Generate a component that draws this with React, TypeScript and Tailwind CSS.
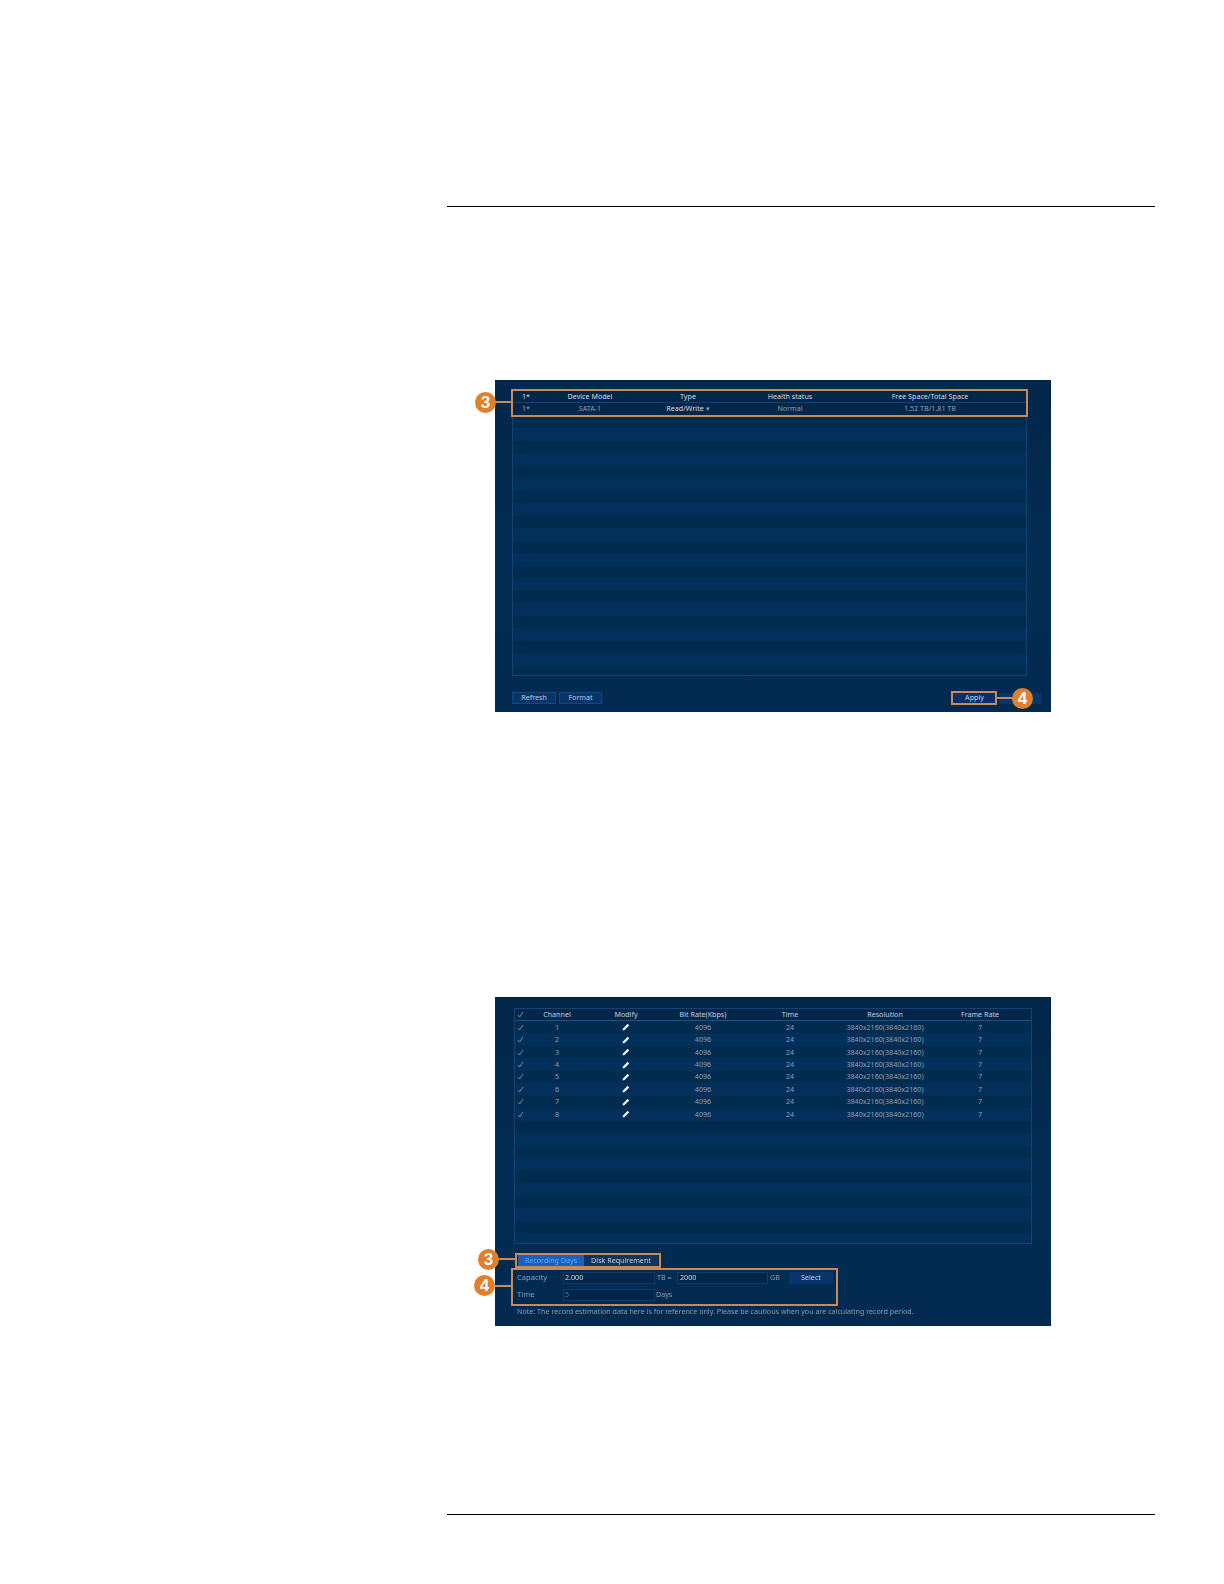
const font = { fontFamily: '"Noto Sans", sans-serif' };

function Callout({ n, className }: { n: string; className: string }) {
  return (
    <div className={`absolute flex h-[21px] w-[21px] items-center justify-center rounded-full bg-[#e0802f] text-[17px] font-bold leading-none text-white font-['Liberation_Sans',sans-serif] ${className}`}>
      {n}
    </div>
  );
}

function Pencil() {
  return (
    <svg width="8" height="8" viewBox="0 0 8 8" className="block">
      <path d="M0.6 7.4 L1 5.4 L5.6 0.8 L7.2 2.4 L2.6 7 Z" fill="#f2f5f8" />
    </svg>
  );
}

function Check() {
  return (
    <svg width="7" height="7" viewBox="0 0 7 7" className="block">
      <path d="M1 4 L2.6 6 L6 1" fill="none" stroke="#8aa0b8" strokeWidth="0.8" />
    </svg>
  );
}

function DiskTable() {
  const stripes = Array.from({ length: 21 }, (_, i) => i);
  const cols = "grid-cols-[26px_102px_94px_110px_170px]";
  return (
    <div className="flex h-[286px] w-[515px] flex-col overflow-hidden border border-[#14436f]">
      <div className={`grid h-[12px] shrink-0 ${cols} items-center border-b border-[#12406b] text-center text-[#d3dce7]`}>
        <span>1*</span>
        <span>Device Model</span>
        <span>Type</span>
        <span>Health status</span>
        <span>Free Space/Total Space</span>
      </div>
      <div className={`grid h-[12.5px] shrink-0 ${cols} items-center border-b border-[#12406b] text-center text-[#8a9fb5]`}>
        <span>1*</span>
        <span>SATA-1</span>
        <span className="text-[#d3dce7]">
          Read/Write <span className="text-[#8a9fb5]">▾</span>
        </span>
        <span>Normal</span>
        <span>1.52 TB/1.81 TB</span>
      </div>
      {stripes.map((i) => (
        <div key={i} className={i % 2 === 0 ? "h-[12.5px] shrink-0 bg-[#022c4f]" : "h-[12.5px] shrink-0 bg-[#03305a]"} />
      ))}
    </div>
  );
}

const channels = ["1", "2", "3", "4", "5", "6", "7", "8"];

function ChannelTable() {
  const empty = Array.from({ length: 10 }, (_, i) => i);
  const cols = "grid-cols-[10px_64px_74px_80px_94px_96px_94px]";
  return (
    <div className="flex h-[236px] w-[518px] flex-col overflow-hidden border border-[#14436f]">
      <div className={`grid h-[12px] shrink-0 ${cols} items-center border-b border-[#1a5486] text-center text-[#c3cfdd]`}>
        <span className="flex justify-center"><Check /></span>
        <span>Channel</span>
        <span>Modify</span>
        <span>Bit Rate(Kbps)</span>
        <span>Time</span>
        <span>Resolution</span>
        <span>Frame Rate</span>
      </div>
      {channels.map((c, i) => (
        <div key={c} className={`grid h-[12.45px] shrink-0 ${cols} items-center text-center text-[#8a9fb5] ${i % 2 === 0 ? "bg-[#022c4f]" : "bg-[#03305a]"}`}>
          <span className="flex justify-center"><Check /></span>
          <span>{c}</span>
          <span className="flex justify-center"><Pencil /></span>
          <span>4096</span>
          <span>24</span>
          <span>3840x2160(3840x2160)</span>
          <span>7</span>
        </div>
      ))}
      {empty.map((i) => (
        <div key={i} className={i % 2 === 0 ? "h-[12.5px] shrink-0 bg-[#022c4f]" : "h-[12.5px] shrink-0 bg-[#03305a]"} />
      ))}
    </div>
  );
}

export default function App() {
  return (
    <div className="h-[1584px] w-[1224px] overflow-hidden bg-white pl-[447px] pt-[206px]" style={font}>
      <div className="h-px w-[708px] bg-black" />

      {/* first screenshot */}
      <div className="relative ml-[48px] mt-[173px] h-[332px] w-[556px] bg-linear-to-b from-[#03264a] via-[#032d54] to-[#022a50] pl-[17px] pt-[10px] text-[7.15px] leading-none blur-[0.25px]">
        <DiskTable />
        <div className="mt-[16px] flex items-center text-[#b9c9dc]">
          <div className="flex h-[12px] w-[44px] items-center justify-center border border-[#0c4a80] bg-[#07356b]">Refresh</div>
          <div className="ml-[3px] flex h-[12px] w-[43px] items-center justify-center border border-[#0c4a80] bg-[#07356b]">Format</div>
          <div className="ml-[350px] flex h-[12px] w-[45px] items-center justify-center bg-[#062f72] text-[#c9d6e6]">Apply</div>
          <div className="ml-[2px] h-[11px] w-[43px] bg-[#07356b]" />
        </div>

        {/* annotations */}
        <div className="absolute left-[16px] top-[9px] h-[28px] w-[517px] border-2 border-[#c98a55]" />
        <div className="absolute left-[-1px] top-[21px] h-[2px] w-[18px] bg-[#c98a55]" />
        <Callout n="3" className="left-[-20px] top-[12px]" />
        <div className="absolute left-[456px] top-[311px] h-[14px] w-[46px] border-2 border-[#c98a55]" />
        <div className="absolute left-[502px] top-[317px] h-[2px] w-[16px] bg-[#c98a55]" />
        <Callout n="4" className="left-[517px] top-[308px]" />
      </div>

      {/* second screenshot */}
      <div className="relative ml-[48px] mt-[285px] h-[329px] w-[556px] bg-linear-to-b from-[#03264a] via-[#032d54] to-[#022a50] pl-[19px] pt-[11px] text-[7.15px] leading-none blur-[0.25px]">
        <ChannelTable />

        <div className="ml-[4px] mt-[11px] flex h-[11px] items-center">
          <div className="flex h-[11px] w-[66px] items-center justify-center bg-[#1b62c0] text-[#5aa5f5]">Recording Days</div>
          <div className="flex h-[11px] w-[74px] items-center justify-center bg-[#0d3560] text-[#c3cfdd]">Disk Requirement</div>
        </div>

        <div className="ml-[3px] mt-[6px] grid w-[316px] grid-cols-[46px_92px_22px_91px_21px_44px] items-center gap-y-[5px] text-[#8a9fb5]">
          <span className="text-[7.6px]">Capacity</span>
          <div className="flex h-[12px] items-center border border-[#0f3c68] bg-[#02254a] pl-[1px] text-[#d3dce7]">2.000</div>
          <span className="pl-[2px]">TB =</span>
          <div className="flex h-[12px] items-center border border-[#0f3c68] bg-[#02254a] pl-[2px] text-[#d3dce7]">2000</div>
          <span className="pl-[2px]">GB</span>
          <div className="flex h-[12px] items-center justify-center bg-[#07356b] text-[#c9d6e6]">Select</div>
          <span className="text-[7.6px]">Time</span>
          <div className="flex h-[12px] items-center border border-[#0f3c68] bg-[#02254a] pl-[1px] text-[#5d7896]">5</div>
          <span className="pl-[1px]">Days</span>
        </div>

        <p className="ml-[3px] mt-[7px] text-[#8a9fb5]">
          Note: The record estimation data here is for reference only. Please be cautious when you are calculating record period.
        </p>

        {/* annotations */}
        <div className="absolute left-[20px] top-[256px] h-[15px] w-[146px] border-2 border-[#c98a55]" />
        <div className="absolute left-[3px] top-[261px] h-[2px] w-[18px] bg-[#c98a55]" />
        <Callout n="3" className="left-[-17px] top-[252px]" />
        <div className="absolute left-[16px] top-[271px] h-[38px] w-[327px] border-2 border-[#c98a55]" />
        <div className="absolute left-[0px] top-[288px] h-[2px] w-[17px] bg-[#c98a55]" />
        <Callout n="4" className="left-[-21px] top-[278px]" />
      </div>

      <div className="mt-[188px] h-px w-[708px] bg-black" />
    </div>
  );
}
